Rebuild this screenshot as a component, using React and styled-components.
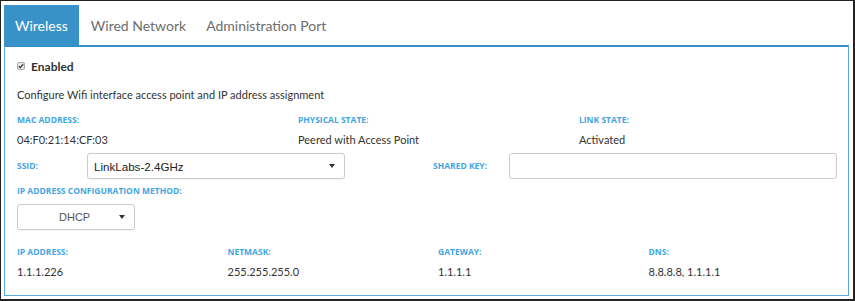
import React from "react";
import styled, { createGlobalStyle } from "styled-components";

const Global = createGlobalStyle`
  html, body { margin: 0; padding: 0; background: #fff; }
  body { font-family: Lato, "Open Sans", sans-serif; color: #333; }
  * { box-sizing: border-box; }
`;

const Frame = styled.div`
  width: 855px;
  height: 301px;
  border-style: solid;
  border-color: #222;
  border-width: 1px 2px 2px 1px;
  padding: 4px 4px 3px 3px;
  display: flex;
  flex-direction: column;
  background: #fff;
`;

const Tabs = styled.div`
  display: flex;
  height: 40px;
`;

const Tab = styled.div`
  display: flex;
  align-items: center;
  padding: ${(p) => (p.$active ? "0 11px 0 11px" : "0 10px")};
  font-size: 14px;
  font-family: Lato, sans-serif;
  color: ${(p) => (p.$active ? "#fff" : "#6d6d6d")};
  background: ${(p) => (p.$active ? "#3892c8" : "transparent")};
  margin-right: ${(p) => (p.$active ? "2px" : "0")};
`;

const Panel = styled.div`
  flex: 1;
  border: 1px solid #5aaadf;
  border-top: 2px solid #3490cb;
  padding: 11px 12px 0 12px;
  display: flex;
  flex-direction: column;
`;

const CheckRow = styled.label`
  display: flex;
  align-items: center;
  gap: 6px;
  height: 16px;
  font-size: 12px;
  font-weight: 700;
  color: #333;
`;

const Check = styled.span`
  width: 8px;
  height: 8px;
  border: 1px solid #aaa;
  border-radius: 2px;
  background: #e8e8e8;
  display: flex;
  align-items: center;
  justify-content: center;
`;

const Description = styled.div`
  margin-top: 13px;
  font-size: 11px;
  line-height: 16px;
  color: #333;
`;

const InfoGrid = styled.div`
  display: grid;
  grid-template-columns: repeat(${(p) => p.$cols}, ${(p) => p.$width}px);
  margin-top: ${(p) => p.$mt}px;
`;

const Field = styled.div`
  display: flex;
  flex-direction: column;
  gap: 6px;
`;

const Label = styled.div`
  font-family: "Open Sans", Lato, sans-serif;
  font-size: 8.5px;
  font-weight: 700;
  line-height: 12px;
  color: #42a6e2;
  text-transform: uppercase;
  white-space: nowrap;
`;

const Value = styled.div`
  font-size: 11px;
  line-height: 16px;
  color: #333;
  white-space: nowrap;
`;

const FormRow = styled.div`
  display: grid;
  grid-template-columns: 70px 258px 88px 76px 328px;
  align-items: center;
  height: 26px;
  margin-top: 5px;
`;

const SelectBox = styled.div`
  position: relative;
  width: ${(p) => p.$w || "auto"};
  height: ${(p) => p.$h}px;
  border: 1px solid #ccc;
  border-radius: 3px;
  background: #fff;
  box-shadow: 0 1px 1px rgba(0, 0, 0, 0.04);
  display: flex;
  align-items: center;
  padding-left: ${(p) => p.$pl}px;
  font-family: "Liberation Sans", Arial, sans-serif;
  font-size: ${(p) => p.$fs}px;
  color: ${(p) => p.$color || "#222"};
`;

const Caret = styled.span`
  position: absolute;
  right: ${(p) => p.$r}px;
  top: 50%;
  margin-top: -2px;
  width: 0;
  height: 0;
  border-left: 3.5px solid transparent;
  border-right: 3.5px solid transparent;
  border-top: 4px solid #333;
`;

const TextInput = styled.div`
  height: 26px;
  border: 1px solid #ccc;
  border-radius: 3px;
  background: #fff;
`;

const SectionLabel = styled(Label)`
  margin-top: 6px;
`;

const DhcpWrap = styled.div`
  margin-top: 7px;
`;

export default function App() {
  return (
    <>
      <Global />
      <Frame>
        <Tabs>
          <Tab $active>Wireless</Tab>
          <Tab>Wired Network</Tab>
          <Tab>Administration Port</Tab>
        </Tabs>
        <Panel>
          <CheckRow>
            <Check>
              <svg width="6" height="6" viewBox="0 0 6 6">
                <path d="M0.8 3.2 L2.4 4.7 L5.2 1.2" stroke="#333" strokeWidth="1.2" fill="none" />
              </svg>
            </Check>
            Enabled
          </CheckRow>
          <Description>Configure Wifi interface access point and IP address assignment</Description>
          <InfoGrid $cols={3} $width={281} $mt={11}>
            <Field>
              <Label>MAC Address:</Label>
              <Value>04:F0:21:14:CF:03</Value>
            </Field>
            <Field>
              <Label>Physical State:</Label>
              <Value>Peered with Access Point</Value>
            </Field>
            <Field>
              <Label>Link State:</Label>
              <Value>Activated</Value>
            </Field>
          </InfoGrid>
          <FormRow>
            <Label>SSID:</Label>
            <SelectBox $h={26} $pl={6} $fs={11.6}>
              LinkLabs-2.4GHz
              <Caret $r={9} />
            </SelectBox>
            <span />
            <Label>Shared Key:</Label>
            <TextInput />
          </FormRow>
          <SectionLabel>IP Address Configuration Method:</SectionLabel>
          <DhcpWrap>
            <SelectBox $w="118px" $h={26} $pl={41} $fs={11} $color="#555">
              DHCP
              <Caret $r={9} />
            </SelectBox>
          </DhcpWrap>
          <InfoGrid $cols={4} $width={210.5} $mt={16}>
            <Field>
              <Label>IP Address:</Label>
              <Value>1.1.1.226</Value>
            </Field>
            <Field>
              <Label>Netmask:</Label>
              <Value>255.255.255.0</Value>
            </Field>
            <Field>
              <Label>Gateway:</Label>
              <Value>1.1.1.1</Value>
            </Field>
            <Field>
              <Label>DNS:</Label>
              <Value>8.8.8.8, 1.1.1.1</Value>
            </Field>
          </InfoGrid>
        </Panel>
      </Frame>
    </>
  );
}
